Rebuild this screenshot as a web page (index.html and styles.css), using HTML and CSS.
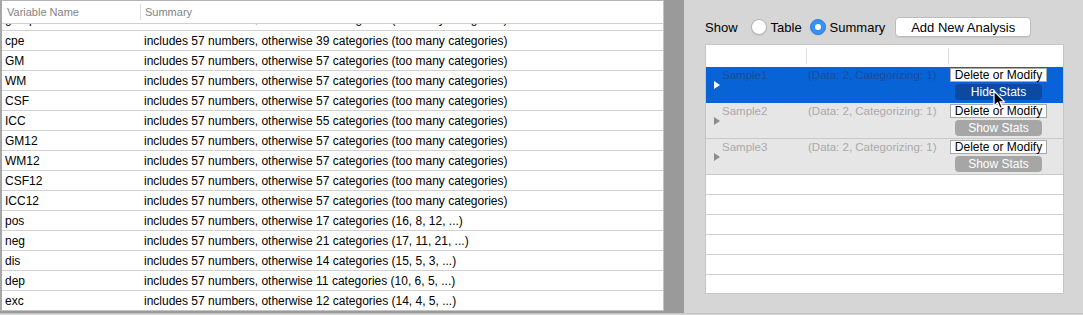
FILE: index.html
```html
<!DOCTYPE html>
<html lang="en">
<head>
  <meta charset="UTF-8" />
  <title>Variables and Analyses</title>
  <link rel="stylesheet" href="styles.css">
</head>
<body>
  <div class="window">
    <!-- Variables table -->
    <div class="data-pane">
      <div class="var-table">
        <div class="var-head">
          <div class="head-name">Variable Name</div>
          <div class="col-sep"></div>
          <div class="head-summary">Summary</div>
        </div>
        <div class="var-body">
          <div class="var-row scrolled"><div class="var-name">group</div><div class="var-summary">includes 57 numbers, otherwise 36 categories (too many categories)</div></div>
          <div class="var-row"><div class="var-name">cpe</div><div class="var-summary">includes 57 numbers, otherwise 39 categories (too many categories)</div></div>
          <div class="var-row"><div class="var-name">GM</div><div class="var-summary">includes 57 numbers, otherwise 57 categories (too many categories)</div></div>
          <div class="var-row"><div class="var-name">WM</div><div class="var-summary">includes 57 numbers, otherwise 57 categories (too many categories)</div></div>
          <div class="var-row"><div class="var-name">CSF</div><div class="var-summary">includes 57 numbers, otherwise 57 categories (too many categories)</div></div>
          <div class="var-row"><div class="var-name">ICC</div><div class="var-summary">includes 57 numbers, otherwise 55 categories (too many categories)</div></div>
          <div class="var-row"><div class="var-name">GM12</div><div class="var-summary">includes 57 numbers, otherwise 57 categories (too many categories)</div></div>
          <div class="var-row"><div class="var-name">WM12</div><div class="var-summary">includes 57 numbers, otherwise 57 categories (too many categories)</div></div>
          <div class="var-row"><div class="var-name">CSF12</div><div class="var-summary">includes 57 numbers, otherwise 57 categories (too many categories)</div></div>
          <div class="var-row"><div class="var-name">ICC12</div><div class="var-summary">includes 57 numbers, otherwise 57 categories (too many categories)</div></div>
          <div class="var-row"><div class="var-name">pos</div><div class="var-summary">includes 57 numbers, otherwise 17 categories (16, 8, 12, ...)</div></div>
          <div class="var-row"><div class="var-name">neg</div><div class="var-summary">includes 57 numbers, otherwise 21 categories (17, 11, 21, ...)</div></div>
          <div class="var-row"><div class="var-name">dis</div><div class="var-summary">includes 57 numbers, otherwise 14 categories (15, 5, 3, ...)</div></div>
          <div class="var-row"><div class="var-name">dep</div><div class="var-summary">includes 57 numbers, otherwise 11 categories (10, 6, 5, ...)</div></div>
          <div class="var-row"><div class="var-name">exc</div><div class="var-summary">includes 57 numbers, otherwise 12 categories (14, 4, 5, ...)</div></div>
        </div>
      </div>
    </div>

    <!-- Analyses panel -->
    <div class="analysis-pane">
      <div class="show-bar">
        <span class="show-label">Show</span>
        <span class="radio"></span><span class="radio-label">Table</span>
        <span class="radio checked"></span><span class="radio-label">Summary</span>
        <button class="add-btn">Add New Analysis</button>
      </div>

      <div class="analysis-table">
        <div class="an-head">
          <div class="an-col1"></div>
          <div class="col-sep"></div>
          <div class="an-col2"></div>
          <div class="col-sep"></div>
        </div>

        <div class="an-row selected">
          <div class="an-name"><span class="disclosure"></span><span class="dim">Sample1</span></div>
          <div class="an-info dim">(Data: 2, Categorizing: 1)</div>
          <div class="an-actions">
            <button class="modify-btn">Delete or Modify</button>
            <button class="stats-btn">Hide Stats</button>
          </div>
        </div>
        <div class="an-row">
          <div class="an-name"><span class="disclosure"></span><span class="dim">Sample2</span></div>
          <div class="an-info dim">(Data: 2, Categorizing: 1)</div>
          <div class="an-actions">
            <button class="modify-btn">Delete or Modify</button>
            <button class="stats-btn">Show Stats</button>
          </div>
        </div>
        <div class="an-row">
          <div class="an-name"><span class="disclosure"></span><span class="dim">Sample3</span></div>
          <div class="an-info dim">(Data: 2, Categorizing: 1)</div>
          <div class="an-actions">
            <button class="modify-btn">Delete or Modify</button>
            <button class="stats-btn">Show Stats</button>
          </div>
        </div>

        <div class="empty-row"></div>
        <div class="empty-row"></div>
        <div class="empty-row"></div>
        <div class="empty-row"></div>
        <div class="empty-row"></div>
        <div class="empty-row"></div>
      </div>
    </div>
  </div>
  <div class="status-strip"></div>

  <!-- mouse pointer over the Hide Stats button -->
  <svg class="cursor" width="13" height="20" viewBox="0 0 13 20">
    <path d="M1 1 L1 16 L4.5 12.6 L7 18.4 L9.3 17.4 L6.9 11.8 L11.6 11.8 Z" fill="#000" stroke="#fff" stroke-width="1.2" stroke-linejoin="round" />
  </svg>
</body>
</html>
```

FILE: styles.css
```css
* {
  box-sizing: border-box;
}

body {
  margin: 0;
  width: 1083px;
  height: 315px;
  overflow: hidden;
  position: relative;
  font-family: "Liberation Sans", Arial, sans-serif;
  background: #d6d6d6;
  color: #000;
}

.window {
  display: flex;
  height: 313px;
}

/* left side: variables */

.data-pane {
  width: 684px;
  padding: 0 20px 2px 0;
  background: #9a9a9a;
}

.var-table {
  height: 311px;
  background: #fff;
  border-top: 1px solid #b4b4b4;
  border-left: 2px solid #a6a6a6;
  border-right: 1px solid #c4c4c4;
  border-bottom: 1px solid #c4c4c4;
  display: flex;
  flex-direction: column;
  font-size: 12px;
}

.var-head {
  height: 23px;
  flex: none;
  display: flex;
  align-items: center;
  border-bottom: 1px solid #d0d0d0;
  font-size: 11px;
  color: #838383;
}

.head-name {
  width: 138px;
  padding-left: 5px;
}

.head-summary {
  padding-left: 4px;
}

.col-sep {
  width: 1px;
  height: 16px;
  background: #dedede;
}

.var-body {
  flex: 1;
  overflow: hidden;
}

.var-row {
  height: 20px;
  display: flex;
  align-items: center;
  border-bottom: 1px solid #d2d2d2;
  white-space: nowrap;
}

/* the list is scrolled a little: only the foot of this row shows */
.var-row.scrolled {
  margin-top: -13px;
  padding-bottom: 3px;
}

.var-name {
  width: 139px;
  padding-left: 3px;
}

.var-summary {
  padding-left: 3px;
}

/* right side: analyses */

.analysis-pane {
  flex: 1;
  padding: 17px 19px 0 21px;
}

.show-bar {
  height: 20px;
  display: flex;
  align-items: center;
  font-size: 13px;
}

.radio {
  width: 16px;
  height: 16px;
  border-radius: 50%;
  background: #fff;
  border: 1px solid #b3b3b3;
  box-shadow: 0 0.5px 1px rgba(0, 0, 0, 0.12);
  margin-left: 8px;
  display: flex;
  align-items: center;
  justify-content: center;
}

.show-label + .radio {
  margin-left: 13px;
}

.radio.checked {
  background: #3790f4;
  border-color: #2b80e6;
}

.radio.checked::after {
  content: "";
  width: 6px;
  height: 6px;
  border-radius: 50%;
  background: #fff;
}

.radio-label {
  margin-left: 4px;
}

.add-btn {
  margin-left: 10px;
  width: 136px;
  height: 20px;
  padding: 0;
  background: #fff;
  border: 1px solid #bdbdbd;
  border-radius: 4px;
  box-shadow: 0 1px 0 rgba(0, 0, 0, 0.06);
  font-family: inherit;
  font-size: 13px;
  color: #000;
}

.analysis-table {
  margin-top: 7px;
  width: 359px;
  height: 250px;
  overflow: hidden;
  background: #fff;
  border: 1px solid #c6c6c6;
  font-size: 11.5px;
}

.an-head {
  height: 22px;
  display: flex;
  align-items: center;
}

.an-col1 {
  width: 100px;
}

.an-col2 {
  width: 141px;
}

.an-row {
  height: 36px;
  display: flex;
  background: #e6e6e6;
  border-bottom: 1px solid #c9c9c9;
}

.an-row.selected {
  background: #0864d6;
  border-bottom-color: #0864d6;
}

.dim {
  color: #a9a9a9;
}

.selected .dim {
  color: #1c4b98;
}

.an-name {
  width: 101px;
  padding-left: 8px;
  display: flex;
  align-items: flex-start;
}

.an-name .dim {
  padding-top: 1px;
  line-height: 14px;
  margin-left: 2px;
}

.disclosure {
  align-self: center;
  width: 0;
  height: 0;
  margin-top: 1px;
  border-top: 4px solid transparent;
  border-bottom: 4px solid transparent;
  border-left: 6px solid #8c8c8c;
}

.selected .disclosure {
  border-left-color: #fff;
}

.an-info {
  width: 142px;
  padding: 1px 0 0 1px;
  line-height: 14px;
  white-space: nowrap;
}

.an-actions {
  width: 97px;
  margin-left: 1px;
  padding-top: 1px;
  display: flex;
  flex-direction: column;
  align-items: center;
  gap: 2px;
}

.modify-btn {
  width: 97px;
  height: 14px;
  padding: 0;
  background: #fff;
  border: 1px solid #a9a9a9;
  border-radius: 0;
  font-family: inherit;
  font-size: 12px;
  line-height: 12px;
  color: #000;
}

.stats-btn {
  width: 87px;
  height: 16px;
  padding: 0;
  border: none;
  border-radius: 4px;
  background: #a6a6a6;
  font-family: inherit;
  font-size: 12px;
  line-height: 16px;
  color: #fff;
}

.selected .stats-btn {
  background: #0b4a9e;
}

.empty-row {
  height: 20px;
  border-bottom: 1px solid #cfcfcf;
}

.status-strip {
  height: 2px;
  border-top: 1px solid #c4c4c4;
  background: #d6d6d6;
}

.cursor {
  position: absolute;
  left: 993px;
  top: 90px;
}
```
